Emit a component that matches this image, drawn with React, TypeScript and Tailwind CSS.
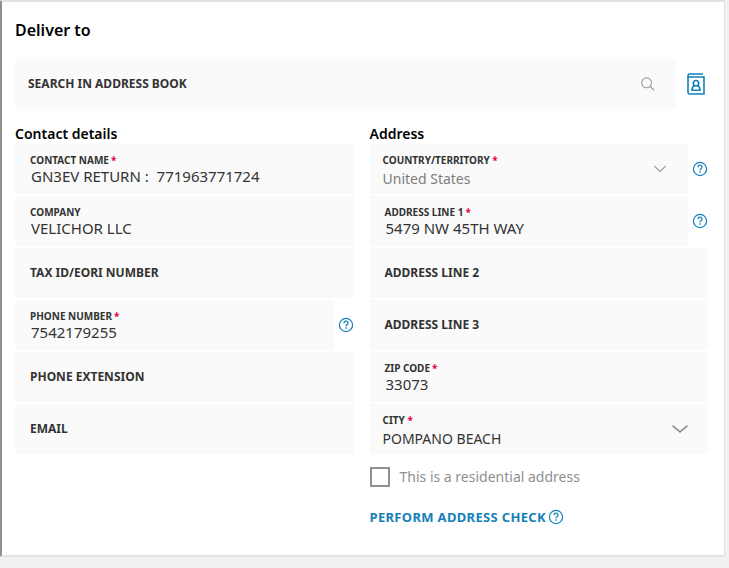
import { useId } from "react";

function HelpIcon() {
  return (
    <svg width="16" height="16" viewBox="0 0 16 16" fill="none" stroke="#1681b9" aria-hidden="true">
      <circle cx="8" cy="8" r="6.6" strokeWidth="1.2" />
      <path d="M6 6.2V5.900a2 1.900 0 1 1 3.300 1.500C8.500 8.100 8 8.300 8 9.300" strokeWidth="1.3" />
      <path d="M8 10.300v1.500" strokeWidth="1.400" />
    </svg>
  );
}

function SearchIcon() {
  return (
    <svg width="16" height="16" viewBox="0 0 16 16" fill="none" stroke="#9a9a9a" strokeWidth="1.1" aria-hidden="true">
      <circle cx="6.600" cy="6.800" r="4.900" />
      <path d="M10.200 10.400L14 14.200" strokeWidth="1.300" />
    </svg>
  );
}

function AddressBookIcon() {
  return (
    <svg width="18" height="22" viewBox="0 0 18 22" fill="none" stroke="#1681b9" strokeWidth="1.6" aria-hidden="true">
      <path d="M16 1H2.500C1.500 1 1 1.600 1 2.500V19.500C1 20.500 1.600 21 2.500 21H17V4H2.200C1.300 4 1 3.400 1 2.500" />
      <circle cx="9" cy="10.200" r="2.700" />
      <path d="M7.600 12.600C6 13.200 5 14.500 5 17.200H13C13 14.500 12 13.200 10.400 12.600" />
    </svg>
  );
}

function Chevron({ large = false }: { large?: boolean }) {
  return large ? (
    <svg width="16" height="8" viewBox="0 0 16 8" fill="none" stroke="#8f8f8f" strokeWidth="1.7" aria-hidden="true">
      <path d="M0.500 0.600L8 6.800L15.500 0.600" />
    </svg>
  ) : (
    <svg width="12" height="8" viewBox="0 0 12 8" fill="none" stroke="#9a9a9a" strokeWidth="1.100" aria-hidden="true">
      <path d="M0.200 1L6 6.500L11.800 1" />
    </svg>
  );
}

function HelpButton({ topic }: { topic: string }) {
  return (
    <button type="button" aria-label={"Help: " + topic} className="flex w-5 shrink-0 items-center justify-end">
      <HelpIcon />
    </button>
  );
}

type FieldProps = { label: string; value?: string; required?: boolean; help?: boolean };

function TextField({ label, value, required, help }: FieldProps) {
  const id = useId();
  const filled = value !== undefined;
  return (
    <div className="flex h-[50px]">
      {filled ? (
        <div className="flex min-w-0 flex-1 flex-col bg-[#fafafa] px-[15px] pt-2.5">
          <label htmlFor={id} className="text-[10px] leading-3 font-bold">
            {label}
            {required && <span className="ml-0.5 text-[#e4003a]">*</span>}
          </label>
          <input id={id} defaultValue={value} className="h-5 w-full bg-transparent pl-px text-[15px] outline-none" />
        </div>
      ) : (
        <div className="flex min-w-0 flex-1 items-center gap-2 bg-[#fafafa] px-[15px]">
          <label htmlFor={id} className="shrink-0 text-xs font-bold">{label}</label>
          <input id={id} className="h-full min-w-0 flex-1 bg-transparent text-[15px] outline-none" />
        </div>
      )}
      {help && <HelpButton topic={label} />}
    </div>
  );
}

function SelectField({ label, value, help, muted }: FieldProps & { muted?: boolean }) {
  const id = useId();
  return (
    <div className="flex h-[50px]">
      <div className="relative min-w-0 flex-1 bg-[#fafafa] px-[13px] pt-2.5">
        <label htmlFor={id} className="block text-[10px] leading-3 font-bold">
          {label} <span className="text-[#e4003a]">*</span>
        </label>
        <select
          id={id}
          className={
            muted
              ? "block h-[26px] w-full appearance-none bg-transparent text-sm text-[#7d7d7d] outline-none"
              : "block h-[26px] w-full appearance-none bg-transparent text-sm outline-none"
          }
        >
          <option>{value}</option>
        </select>
        <span
          className={
            muted
              ? "pointer-events-none absolute inset-y-0 right-[22px] flex items-center"
              : "pointer-events-none absolute inset-y-0 right-5 flex items-center"
          }
        >
          <Chevron large={!muted} />
        </span>
      </div>
      {help && <HelpButton topic={label} />}
    </div>
  );
}

export default function App() {
  return (
    <div className="min-h-screen bg-[#f1f1f1] pr-1 font-['Noto_Sans',sans-serif] text-[#333333]">
      <main className="border-t-2 border-r border-b-2 border-l-2 border-[#e2e2e2] border-l-[#8f8f8f] bg-white pt-4 pr-4 pb-7 pl-[13px]">
        <h1 className="text-base leading-6 font-semibold text-black">Deliver to</h1>

        <div className="mt-[17px] flex items-center">
          <div className="flex h-[50px] flex-1 items-center gap-2 bg-[#fafafa] pr-5 pl-[13px]">
            <label htmlFor="address-search" className="text-xs font-bold">SEARCH IN ADDRESS BOOK</label>
            <input id="address-search" className="h-full min-w-0 flex-1 bg-transparent text-[15px] outline-none" />
            <button type="button" aria-label="Search">
              <SearchIcon />
            </button>
          </div>
          <button type="button" aria-label="Open address book" className="flex w-8 justify-center pl-2">
            <AddressBookIcon />
          </button>
        </div>

        <div className="mt-3.5 grid grid-cols-2 gap-4">
          <section>
            <h2 className="text-sm leading-[21px] font-semibold text-black">Contact details</h2>
            <div className="flex flex-col gap-0.5">
              <TextField label="CONTACT NAME" value="GN3EV RETURN :  771963771724" required />
              <TextField label="COMPANY" value="VELICHOR LLC" />
              <TextField label="TAX ID/EORI NUMBER" />
              <TextField label="PHONE NUMBER" value="7542179255" required help />
              <TextField label="PHONE EXTENSION" />
              <TextField label="EMAIL" />
            </div>
          </section>

          <section>
            <h2 className="text-sm leading-[21px] font-semibold text-black">Address</h2>
            <div className="flex flex-col gap-0.5">
              <SelectField label="COUNTRY/TERRITORY" value="United States" muted help />
              <TextField label="ADDRESS LINE 1" value="5479 NW 45TH WAY" required help />
              <TextField label="ADDRESS LINE 2" />
              <TextField label="ADDRESS LINE 3" />
              <TextField label="ZIP CODE" value="33073" required />
              <SelectField label="CITY" value="POMPANO BEACH" />
            </div>
            <label className="mt-[13px] flex items-center gap-2.5 text-sm leading-5 text-[#8f8f8f]">
              <input type="checkbox" className="size-5 appearance-none border-2 border-[#8f8f8f] bg-white checked:bg-[#8f8f8f]" />
              This is a residential address
            </label>
            <div className="mt-5 flex items-center gap-0.5">
              <button type="button" className="text-[13px] leading-5 font-bold tracking-wide text-[#1681b9]">
                PERFORM ADDRESS CHECK
              </button>
              <button type="button" aria-label="Help: address check">
                <HelpIcon />
              </button>
            </div>
          </section>
        </div>
      </main>
    </div>
  );
}
